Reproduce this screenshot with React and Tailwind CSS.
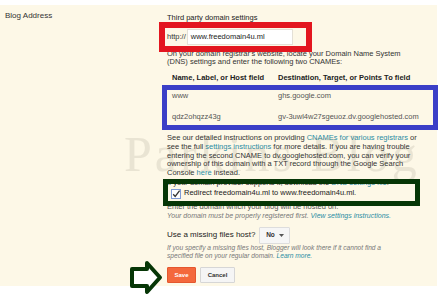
import React from 'react';

const Link = ({ children }) => <span className="text-[#2a8ca3]">{children}</span>;

const Line = ({ children, className = '' }) => (
  <div className={`whitespace-nowrap ${className}`}>{children}</div>
);

export default function App() {
  return (
    <div className="relative w-[443px] h-[295px] overflow-hidden bg-white font-['Liberation_Sans',Arial,sans-serif] text-[#333]">
      <div className="mt-[5px] flex h-[281px] w-[437px] bg-[#fdf8e7]">
        {/* label column */}
        <div className="w-[162px] pl-[5px] pt-[6px] text-[8px] leading-[9px] text-[#333]">Blog Address</div>

        {/* settings column */}
        <div className="relative flex flex-col pl-[5px] text-[7.5px] leading-[8.6px] text-[#333]">
          <Line className="mt-[8px] leading-[9px] text-[#222]">Third party domain settings</Line>

          <div className="mt-[7px] flex h-[16px] items-center">
            <span className="text-[#333]">http://</span>
            <div className="ml-[1px] flex h-[16px] w-[106px] items-center border border-[#e4e0d6] bg-white pl-[3px] text-[#222]">
              www.freedomain4u.ml
            </div>
          </div>

          <div className="mt-[4.6px]">
            <Line>On your domain registrar's website, locate your Domain Name System</Line>
            <Line>(DNS) settings and enter the following two CNAMEs:</Line>
          </div>

          <div className="mt-[7.3px] flex pl-[5px] font-bold text-[#222]">
            <div className="w-[106px] whitespace-nowrap">Name, Label, or Host field</div>
            <div className="whitespace-nowrap">Destination, Target, or Points To field</div>
          </div>

          <div className="mt-[9.2px] flex pl-[5px] text-[#555]">
            <div className="w-[106px]">www</div>
            <div>ghs.google.com</div>
          </div>
          <div className="mt-[12.4px] flex pl-[5px] text-[#555]">
            <div className="w-[106px]">qdz2ohqzz43g</div>
            <div className="whitespace-nowrap">gv-3uwl4w27sgeuoz.dv.googlehosted.com</div>
          </div>

          <div className="mt-[13px]">
            <Line>See our detailed instructions on providing <Link>CNAMEs for various registrars</Link> or</Line>
            <Line>see the full <Link>settings instructions</Link> for more details. If you are having trouble</Line>
            <Line>entering the second CNAME to dv.googlehosted.com, you can verify your</Line>
            <Line>ownership of this domain with a TXT record through the Google Search</Line>
            <Line>Console <Link>here</Link> instead.</Line>
          </div>

          <Line className="mt-[1.6px]">If your domain provider supports it, download the <Link>DNS settings file</Link>.</Line>

          <div className="mt-[1.7px] flex h-[8.6px] items-center whitespace-nowrap pl-[4px] text-[#222]">
            <svg width="10" height="10" viewBox="0 0 10 10" className="mr-[3px] shrink-0">
              <rect x="0.5" y="0.5" width="9" height="9" fill="#fff" stroke="#7f9bd6" />
              <path d="M2.2 5.2 L4.2 7.4 L8.6 1.6" fill="none" stroke="#333" strokeWidth="1.3" />
            </svg>
            Redirect freedomain4u.ml to www.freedomain4u.ml.
          </div>

          <Line className="mt-[5px] text-[#555]">Enter the domain which your blog will be hosted on.</Line>
          <Line className="mt-[1px] text-[7px] italic text-[#777]">
            Your domain must be properly registered first. <Link>View settings instructions.</Link>
          </Line>

          <div className="mt-[6px] flex h-[17px] items-center">
            <span className="text-[8px] text-[#222]">Use a missing files host?</span>
            <div className="ml-[4px] flex h-[17px] w-[31px] items-center justify-center gap-[4px] rounded-[1px] border border-[#ddd] bg-[#f6f6f6] text-[6.5px] font-bold text-[#333]">
              No
              <svg width="5" height="3" viewBox="0 0 5 3">
                <path d="M0 0 L5 0 L2.5 3 Z" fill="#555" />
              </svg>
            </div>
          </div>

          <div className="text-[6.6px] italic leading-[8.4px] text-[#777]">
            <Line>If you specify a missing files host, Blogger will look there if it cannot find a</Line>
            <Line>specified file on your regular domain. <Link>Learn more.</Link></Line>
          </div>

          <div className="mt-[6px] flex gap-[4px]">
            <button className="flex h-[16px] w-[29px] items-center justify-center rounded-[1px] border border-[#e4572e] bg-[#f4683c] text-[6px] font-bold text-white">
              Save
            </button>
            <button className="flex h-[16px] w-[35px] items-center justify-center rounded-[1px] border border-[#d6d6d6] bg-[#f5f5f5] text-[6px] font-bold text-[#333]">
              Cancel
            </button>
          </div>
        </div>
      </div>

      {/* watermark */}
      <div className="pointer-events-none absolute left-[124px] top-[126px] whitespace-nowrap font-['Liberation_Serif',serif] text-[50px] leading-[56px] tracking-[3px] text-[#6b6352] opacity-[0.13]">
        Parkins Blog
      </div>

      {/* annotation boxes */}
      <div className="absolute left-[159px] top-[22px] h-[30px] w-[153px] border-[6px] border-[#e3161f]" />
      <div className="absolute left-[162px] top-[85px] h-[45px] w-[276px] border-[5px] border-[#3b3fc7]" />
      <div className="absolute left-[163px] top-[179px] h-[27px] w-[257px] border-[5px] border-[#063606]" />

      {/* arrow */}
      <svg className="absolute left-[128px] top-[259px]" width="36" height="37" viewBox="0 0 36 37">
        <polygon
          points="4,10 19,10 19,4 32,18.5 19,33 19,27 4,27"
          fill="#fff"
          stroke="#063606"
          strokeWidth="4"
          strokeLinejoin="round"
        />
      </svg>
    </div>
  );
}
